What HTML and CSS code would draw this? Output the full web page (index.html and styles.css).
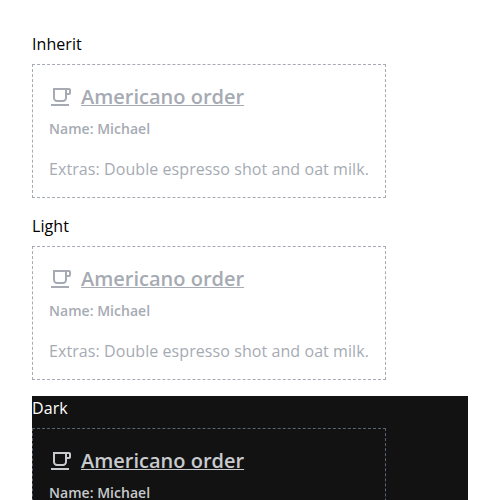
FILE: index.html
```html
<!DOCTYPE html>
<html lang="en">
<head>
<meta charset="utf-8">
<title>Americano order</title>
<link rel="stylesheet" href="styles.css">
</head>
<body>
<svg class="defs" width="0" height="0"><symbol id="cafe" viewBox="0 0 24 24"><path d="M16 5v8c0 1.100-.9 2-2 2H8c-1.100 0-2-.9-2-2V5h10m4-2H4v10c0 2.210 1.790 4 4 4h6c2.210 0 4-1.790 4-4v-3h2c1.110 0 2-.9 2-2V5c0-1.110-.89-2-2-2zm-2 5V5h2v3h-2zm2 11H2v2h18v-2z"/></symbol></svg>
<section class="theme">
<p class="label">Inherit</p>
<article class="card">
<div class="heading"><svg class="icon"><use href="#cafe"/></svg><a class="title">Americano order</a></div>
<p class="subheading">Name: Michael</p>
<p class="message">Extras: Double espresso shot and oat milk.</p>
</article>
</section>
<section class="theme">
<p class="label">Light</p>
<article class="card">
<div class="heading"><svg class="icon"><use href="#cafe"/></svg><a class="title">Americano order</a></div>
<p class="subheading">Name: Michael</p>
<p class="message">Extras: Double espresso shot and oat milk.</p>
</article>
</section>
<section class="theme dark">
<p class="label">Dark</p>
<article class="card">
<div class="heading"><svg class="icon"><use href="#cafe"/></svg><a class="title">Americano order</a></div>
<p class="subheading">Name: Michael</p>
</article>
</section>
</body>
</html>
```
FILE: styles.css
```css
* { box-sizing: border-box; }
html { overflow: hidden; }
body { margin: 0; padding: 32px 32px 0; height: 500px; overflow: hidden; font: 16px/24px "Open Sans", sans-serif; color: #000; background: #fff; }
p { margin: 0; }
.defs { position: absolute; }
.theme { margin-bottom: 16px; }
.label { margin-bottom: 8px; letter-spacing: .07px; }
.card { width: 354px; height: 134px; padding: 16px; border: 1px dashed #a6abb3; color: #a6abb3; }
.heading { display: flex; align-items: center; gap: 8px; height: 32px; }
.icon { width: 24px; height: 24px; fill: currentColor; flex: none; }
.title { font-size: 20px; line-height: 32px; font-weight: 600; text-decoration: underline; text-decoration-thickness: 1px; }
.subheading { font-size: 14px; line-height: 24px; font-weight: 600; margin-top: 4px; letter-spacing: .03px; }
.message { margin-top: 16px; white-space: nowrap; letter-spacing: .076px; }
.dark { height: 104px; margin: 0; overflow: hidden; background: #121212; color: #fff; }
.dark .card { height: 134px; border-color: #5a6472; color: #c8cacd; }
```
